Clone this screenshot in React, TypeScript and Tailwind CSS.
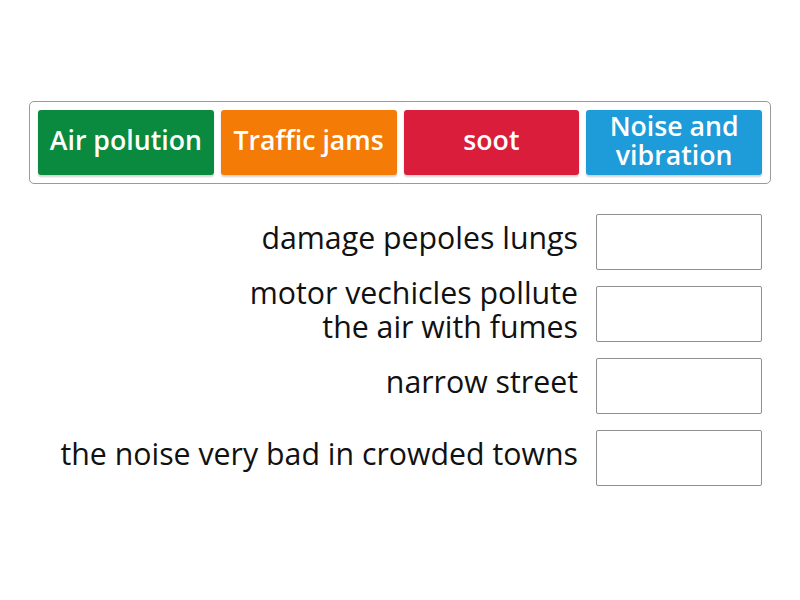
import React from 'react';

const tiles = [
  { label: 'Air polution', color: 'bg-[#0a8a3e]' },
  { label: 'Traffic jams', color: 'bg-[#f47b06]' },
  { label: 'soot', color: 'bg-[#da1d3b]' },
  { label: 'Noise and vibration', color: 'bg-[#1e9bd9]' },
];

const prompts = [
  'damage pepoles lungs',
  'motor vechicles pollute\nthe air with fumes',
  'narrow street',
  'the noise very bad in crowded towns',
];

export default function App() {
  return (
    <div className="w-[800px] h-[600px] bg-white font-['Open_Sans',sans-serif] pt-[101px] pl-[29px]">
      {/* Answer tiles */}
      <div className="w-[742px] h-[83px] border border-[#9a9a9a] rounded-[5px] p-[8px] grid grid-cols-4 gap-[7px]">
        {tiles.map((t) => (
          <div
            key={t.label}
            className={`${t.color} rounded-[3px] shadow-[0_2px_2px_rgba(0,0,0,0.18)] flex items-center justify-center text-center text-white font-semibold text-[26.7px] leading-[29px] px-2 pb-[6px]`}
          >
            {t.label}
          </div>
        ))}
      </div>

      {/* Targets */}
      <div className="w-[733px] mt-[30px] flex flex-col gap-[16px]">
        {prompts.map((p) => (
          <div key={p} className="h-[56px] flex items-center justify-end gap-[18px]">
            <div className="text-right text-[30.3px] leading-[34px] text-[#111] whitespace-pre-line pb-[9px]">{p}</div>
            <div className="w-[166px] h-[56px] border border-[#8f8f8f] rounded-[2px] shrink-0" />
          </div>
        ))}
      </div>
    </div>
  );
}
